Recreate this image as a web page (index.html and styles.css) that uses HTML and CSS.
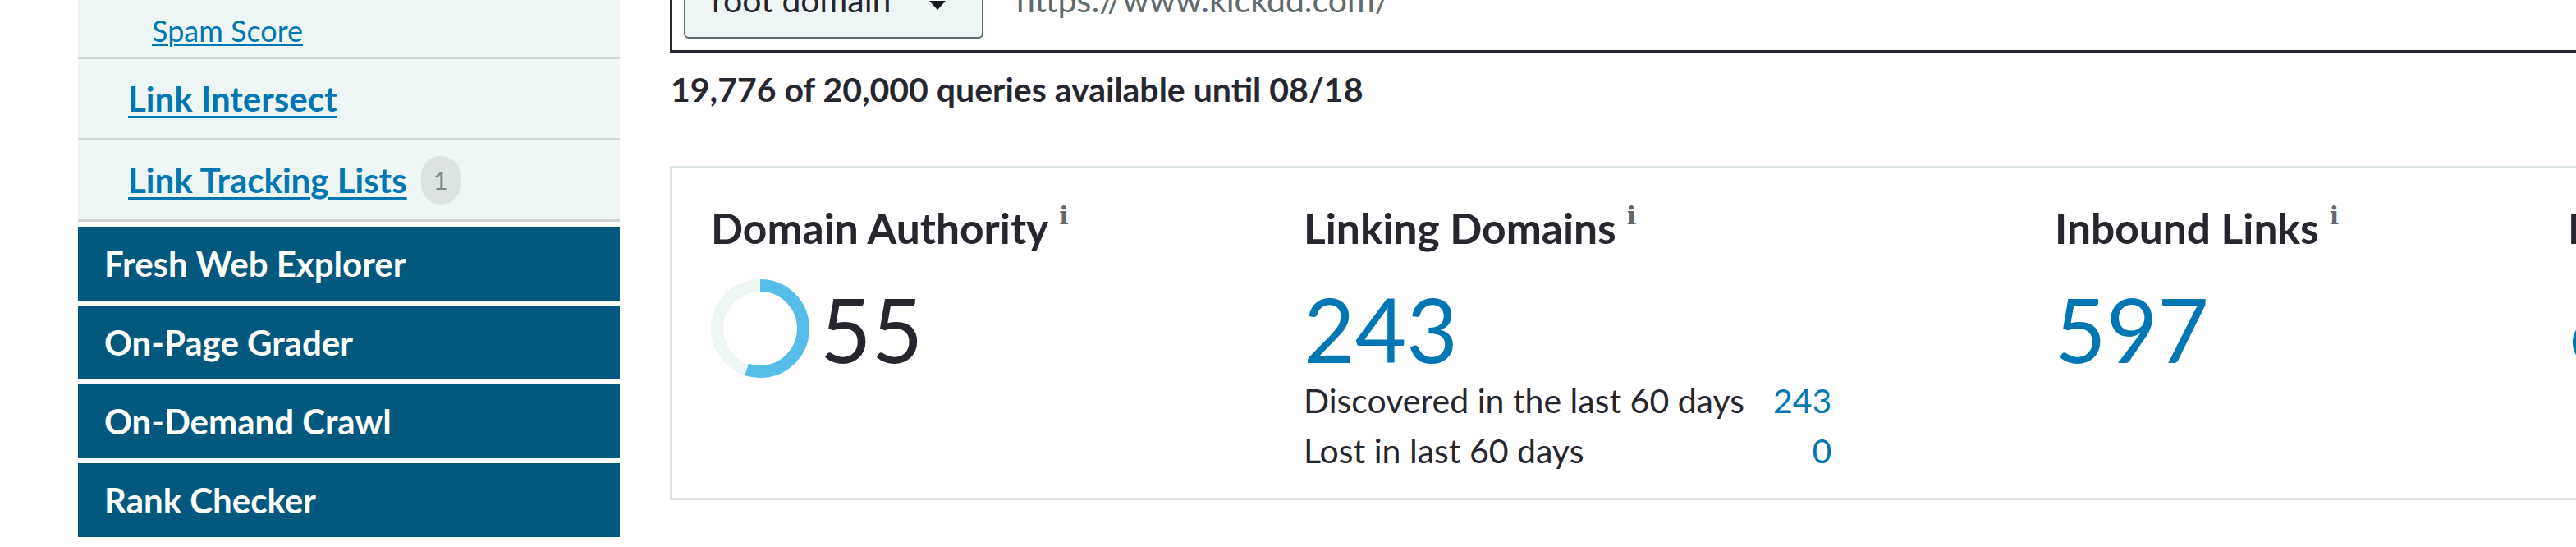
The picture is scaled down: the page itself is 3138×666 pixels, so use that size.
FILE: index.html
```html
<!DOCTYPE html>
<html lang="en">
<head>
<meta charset="utf-8">
<title>Link Explorer</title>
<link rel="stylesheet" href="styles.css">
</head>
<body>
<div class="page">
  <aside class="sidebar">
    <ul class="subnav">
      <li class="sub-row sub-row--child"><a class="sub-link sub-link--small" href="#">Spam Score</a></li>
      <li class="sub-row"><a class="sub-link" href="#">Link Intersect</a></li>
      <li class="sub-row"><a class="sub-link" href="#">Link Tracking Lists</a><span class="badge">1</span></li>
    </ul>
    <nav class="tools">
      <a class="tool" href="#">Fresh Web Explorer</a>
      <a class="tool" href="#">On-Page Grader</a>
      <a class="tool" href="#">On-Demand Crawl</a>
      <a class="tool" href="#">Rank Checker</a>
    </nav>
  </aside>

  <main class="main">
    <div class="search">
      <div class="select"><span class="select-text">root domain</span><span class="caret"></span></div>
      <div class="url">https://www.kickdd.com/</div>
    </div>

    <p class="quota">19,776 of 20,000 queries available until 08/18</p>

    <section class="card">
      <div class="metric">
        <h3 class="metric-title">Domain Authority<span class="info">i</span></h3>
        <div class="metric-value">
          <svg class="donut" width="120" height="120" viewBox="0 0 120 120">
            <circle cx="60" cy="60" r="52.5" fill="none" stroke="#eef6f5" stroke-width="15"/>
            <circle cx="60" cy="60" r="52.5" fill="none" stroke="#56bde9" stroke-width="15"
                    stroke-dasharray="181.4 400" transform="rotate(-90 60 60)"/>
          </svg>
          <span class="big big--dark">55</span>
        </div>
      </div>

      <div class="metric">
        <h3 class="metric-title">Linking Domains<span class="info">i</span></h3>
        <div class="metric-value"><span class="big">243</span></div>
        <div class="stats">
          <span class="stat-label">Discovered in the last 60 days</span><span class="stat-num">243</span>
          <span class="stat-label">Lost in last 60 days</span><span class="stat-num">0</span>
        </div>
      </div>

      <div class="metric">
        <h3 class="metric-title">Inbound Links<span class="info">i</span></h3>
        <div class="metric-value"><span class="big">597</span></div>
      </div>

      <div class="metric">
        <h3 class="metric-title">Ranking Keywords<span class="info">i</span></h3>
        <div class="metric-value"><span class="big">6</span></div>
      </div>
    </section>
  </main>
</div>
</body>
</html>
```

FILE: styles.css
```css
html, body {
  margin: 0;
  padding: 0;
  background: #ffffff;
}

body {
  font-family: Lato, "Noto Sans", "Liberation Sans", sans-serif;
  color: #26262f;
  width: 3138px;
  height: 666px;
  overflow: hidden;
}

.page {
  display: flex;
  align-items: flex-start;
}

/* ---------- sidebar ---------- */
.sidebar {
  flex: 0 0 660px;
  margin-left: 95px;
}

.subnav {
  list-style: none;
  margin: 0;
  padding: 0;
}

.sub-row {
  display: flex;
  align-items: center;
  height: 96px;
  padding-left: 61px;
  background: #eef6f5;
  border-bottom: 3px solid #cfd4d4;
}

.sub-row--child {
  display: block;
  height: auto;
  padding: 17px 0 12px 90px;
}

.sub-link {
  color: #0077b3;
  font-weight: 700;
  font-size: 42px;
  line-height: 48px;
  text-decoration: underline;
  text-decoration-thickness: 3px;
  text-underline-offset: 5px;
}

.sub-link--small {
  font-weight: 400;
  font-size: 36px;
  line-height: 40px;
  text-decoration-thickness: 2px;
  text-underline-offset: 3px;
}

.badge {
  display: flex;
  align-items: center;
  justify-content: center;
  width: 48px;
  height: 59px;
  margin-left: 17px;
  border-radius: 24px;
  background: #dce3e2;
  color: #7a8584;
  font-size: 31px;
}

.tools {
  display: flex;
  flex-direction: column;
  gap: 6px;
  margin-top: 6px;
}

.tool {
  display: flex;
  align-items: center;
  height: 90px;
  padding-left: 32px;
  background: #02587d;
  color: #ffffff;
  font-weight: 700;
  font-size: 42px;
  line-height: 48px;
  text-decoration: none;
}

/* ---------- main ---------- */
.main {
  flex: 0 0 2800px;
  margin-left: 61px;
}

.search {
  display: flex;
  align-items: center;
  margin-top: -64px;
  padding: 14px;
  border: 3px solid #26262f;
}

.select {
  display: flex;
  align-items: center;
  justify-content: space-between;
  box-sizing: border-box;
  width: 365px;
  height: 94px;
  padding: 0 44px 0 32px;
  border: 2px solid #5f6a6a;
  border-radius: 6px;
  background: #eef6f5;
}

.select-text {
  font-size: 41px;
  line-height: 90px;
  color: #26262f;
}

.caret {
  width: 0;
  height: 0;
  margin-top: 12px;
  border-left: 10px solid transparent;
  border-right: 10px solid transparent;
  border-top: 11px solid #1a1a1f;
}

.url {
  margin-left: 40px;
  font-size: 41px;
  line-height: 90px;
  color: #5f6a6a;
}

.quota {
  margin: 22px 0 0 1px;
  font-size: 41px;
  font-weight: 700;
  line-height: 46px;
}

/* ---------- card ---------- */
.card {
  display: grid;
  grid-template-columns: 722px 915px 625px 600px;
  margin-top: 70px;
  padding: 43px 0 27px 47px;
  border: 3px solid #dbe3e1;
}

.metric-title {
  margin: 0;
  font-size: 51.5px;
  font-weight: 700;
  line-height: 58px;
  white-space: nowrap;
}

.info {
  margin-left: 13px;
  font-family: "DejaVu Serif", "Liberation Serif", serif;
  font-size: 30px;
  font-weight: 700;
  line-height: 0;
  vertical-align: 24px;
  color: #5f6a6a;
}

.metric-value {
  display: flex;
  align-items: center;
  height: 120px;
  margin-top: 34px;
}

.donut {
  display: block;
  margin-right: 13px;
}

.big {
  font-size: 108px;
  font-weight: 400;
  line-height: 120px;
  color: #0077b3;
}

.big--dark {
  color: #26262f;
}

.stats {
  display: grid;
  grid-template-columns: auto auto;
  justify-content: start;
  column-gap: 35px;
  margin-top: -3px;
  font-size: 41px;
  line-height: 61px;
}

.stat-num {
  text-align: right;
  color: #0077b3;
}
```
